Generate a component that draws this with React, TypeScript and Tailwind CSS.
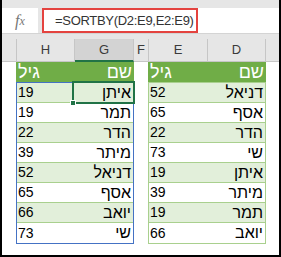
const LEFT = [
  ["איתן", "19"],
  ["תמר", "19"],
  ["הדר", "22"],
  ["מיתר", "39"],
  ["דניאל", "52"],
  ["אסף", "65"],
  ["יואב", "66"],
  ["שי", "73"],
];

const RIGHT = [
  ["דניאל", "52"],
  ["אסף", "65"],
  ["הדר", "22"],
  ["שי", "73"],
  ["איתן", "19"],
  ["מיתר", "39"],
  ["תמר", "19"],
  ["יואב", "66"],
];

function TableHead() {
  return (
    <div className="h-[20px] bg-[#70ad47] flex items-center text-white text-[18px] leading-none">
      <div className="w-[58px] pl-[2px]">גיל</div>
      <div className="flex-1 text-right pr-[2px]">שם</div>
    </div>
  );
}

export default function App() {
  return (
    <div className="w-[281px] h-[257px] bg-white border-l-2 border-r-2 border-b-2 border-black flex flex-col overflow-hidden font-['Liberation_Sans',sans-serif]">
      {/* Formula bar */}
      <div className="bg-[#e6e6e6] pt-[8px] pb-[5px]">
        <div className="h-[26px] flex border-b border-[#d4d4d4]">
          <div className="w-[36px] bg-white flex items-center justify-center text-[#767676] font-['Liberation_Serif',serif] italic text-[16px] leading-none">
            f<span className="text-[12px]">x</span>
          </div>
          <div className="w-[4px]" />
          <div className="flex-1 bg-white">
            <div className="w-[156px] h-full border-2 border-[#e4433f] flex items-center pl-[11px] text-[13px] text-[#333] tracking-[-0.3px]">
              =SORTBY(D2:E9,E2:E9)
            </div>
          </div>
        </div>
      </div>

      {/* Column headers */}
      <div className="h-[23px] flex bg-[#e6e6e6] text-[13px] text-[#3a3a3a]">
        <div className="w-[15px] border-r border-b border-[#c6c6c6]" />
        <div className="w-[58px] border-r border-b border-[#c6c6c6] flex items-center justify-center">H</div>
        <div className="w-[59px] bg-[#d3d3d3] border-r border-[#c6c6c6] border-b-2 border-b-[#217346] flex items-center justify-center">G</div>
        <div className="w-[15px] border-r border-b border-[#c6c6c6] flex items-center justify-center">F</div>
        <div className="w-[59px] border-r border-b border-[#c6c6c6] flex items-center justify-center">E</div>
        <div className="w-[58px] border-r border-b border-[#c6c6c6] flex items-center justify-center">D</div>
        <div className="flex-1 border-b border-[#c6c6c6]" />
      </div>

      {/* Sheet body */}
      <div className="flex text-black">
        <div className="w-[14px]" />
        {/* spilled result */}
        <div className="w-[118px] flex flex-col">
          <TableHead />
          <div className="border border-[#4472c4]">
            {LEFT.map(([name, age], i) => (
              <div
                key={i}
                className={`h-[20px] flex items-center ${i < 7 ? "border-b border-[#a9d08e]" : ""} ${i % 2 === 0 ? "bg-[#e2efda]" : "bg-white"}`}
              >
                <div className="w-[57px] pl-[1px] text-[14px]">{age}</div>
                <div className="flex-1 h-full relative flex items-center justify-end pr-[2px] text-[16px]">
                  {name}
                  {i === 0 && (
                    <>
                      <div className="absolute -left-[2px] -top-[2px] -right-[2px] -bottom-[2px] border-2 border-[#217346]" />
                      <div className="absolute -left-[4px] -bottom-[4px] w-[6px] h-[6px] bg-[#217346] border border-white" />
                    </>
                  )}
                </div>
              </div>
            ))}
          </div>
        </div>
        <div className="w-[14px]" />
        {/* source table */}
        <div className="w-[118px] flex flex-col">
          <TableHead />
          <div className="border border-[#a9d08e]">
            {RIGHT.map(([name, age], i) => (
              <div
                key={i}
                className={`h-[20px] flex items-center ${i < 7 ? "border-b border-[#a9d08e]" : ""} ${i % 2 === 0 ? "bg-[#e2efda]" : "bg-white"}`}
              >
                <div className="w-[57px] pl-[1px] text-[14px]">{age}</div>
                <div className="flex-1 text-right pr-[2px] text-[16px]">{name}</div>
              </div>
            ))}
          </div>
        </div>
      </div>
    </div>
  );
}
